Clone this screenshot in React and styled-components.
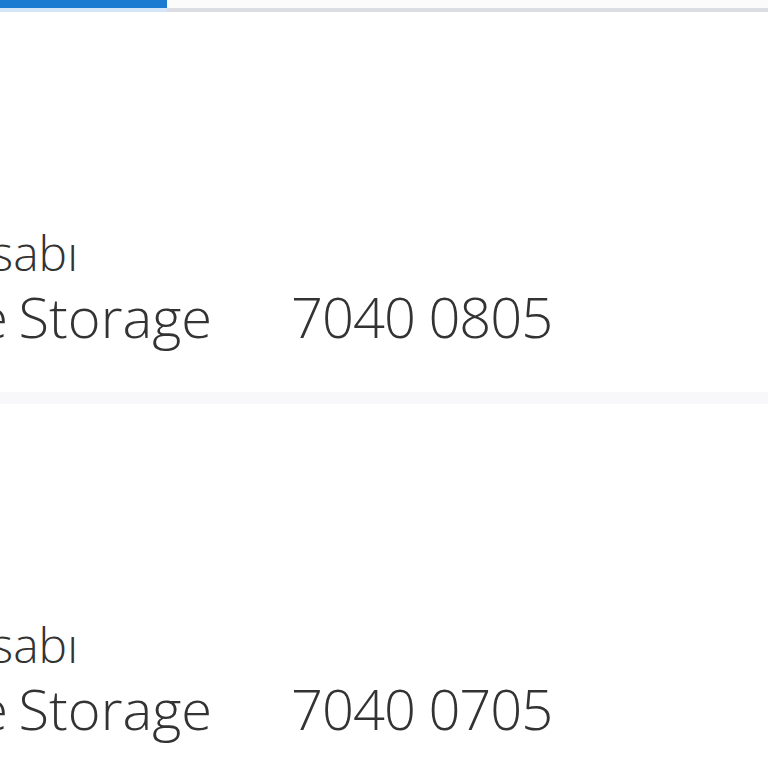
import styled, { createGlobalStyle } from "styled-components";

const GlobalStyle = createGlobalStyle`
  html, body {
    margin: 0;
    padding: 0;
    background: #ffffff;
  }
  body {
    font-family: "Open Sans", "Noto Sans", sans-serif;
    color: #333333;
    overflow: hidden;
  }
`;

const accounts = [
  { title: "Vadesiz Hesabı", name: "Online Storage", number: "7040 0805" },
  { title: "Vadesiz Hesabı", name: "Online Storage", number: "7040 0705" },
];

const App = () => {
  return (
    <Page>
      <GlobalStyle />
      <Tabs>
        <Tab $active />
        <Tab />
      </Tabs>
      <List>
        {accounts.map((acc) => (
          <Card key={acc.number}>
            <TitleCell>
              <span>{acc.title}</span>
            </TitleCell>
            <Row>
              <NameCell>
                <span>{acc.name}</span>
              </NameCell>
              <Number>{acc.number}</Number>
            </Row>
          </Card>
        ))}
      </List>
    </Page>
  );
};

const Page = styled.div`
  width: 768px;
  height: 768px;
  overflow: hidden;
  background: #ffffff;
`;

const Tabs = styled.div`
  display: flex;
`;

const Tab = styled.div`
  height: 8px;
  flex: ${({ $active }) => ($active ? "0 0 167px" : "1")};
  background: ${({ $active }) => ($active ? "#1a7bd0" : "#fbfbfc")};
  border-bottom: 4px solid ${({ $active }) => ($active ? "#d3e5f6" : "#dcdde2")};
`;

const List = styled.div`
  display: flex;
  flex-direction: column;
  gap: 12px;
  background: linear-gradient(#f5f5f8, #fbfbfc);
`;

const Card = styled.div`
  height: 380px;
  background: #ffffff;
  padding-top: 213px;
  box-sizing: border-box;
  overflow: hidden;
`;

const TitleCell = styled.div`
  width: 78px;
  display: flex;
  justify-content: flex-end;
  white-space: nowrap;
  font-size: 48px;
  line-height: 56px;
  font-weight: 300;
`;

const Row = styled.div`
  display: flex;
  align-items: baseline;
  gap: 79px;
  margin-top: 3px;
  font-size: 56px;
  line-height: 64px;
  font-weight: 300;
`;

const NameCell = styled.div`
  width: 212px;
  flex-shrink: 0;
  display: flex;
  justify-content: flex-end;
  white-space: nowrap;
  word-spacing: -4px;
`;

const Number = styled.span`
  white-space: nowrap;
  letter-spacing: -1px;
`;

export default App;
